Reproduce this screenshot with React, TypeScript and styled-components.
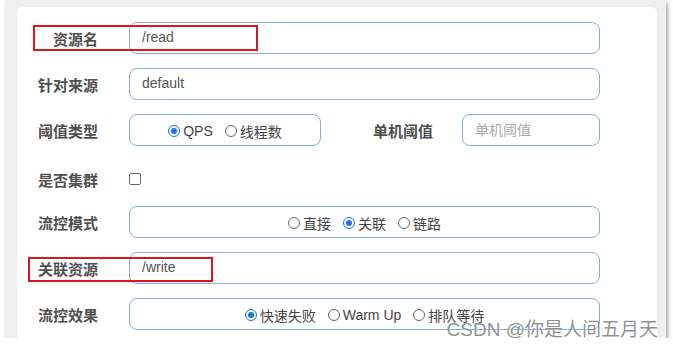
import styled, { createGlobalStyle } from "styled-components";

const GlobalStyle = createGlobalStyle`
  html, body {
    margin: 0;
    padding: 0;
    background: #ffffff;
  }
  body {
    font-family: "Liberation Sans", "Noto Sans CJK SC", sans-serif;
  }
`;

const Frame = styled.div`
  position: relative;
  box-sizing: border-box;
  width: 661px;
  height: 338px;
  margin-left: 5px;
  padding: 7px 9px 0 12px;
  background: #efefef;
  box-shadow: 2px 3px 4px rgba(0, 0, 0, 0.35);
`;

const Card = styled.div`
  box-sizing: border-box;
  height: 331px;
  background: #ffffff;
  border-radius: 6px 6px 0 0;
  padding: 15px 57px 0 0;
  display: grid;
  grid-template-columns: 81px 1fr;
  grid-auto-rows: 32px;
  column-gap: 31px;
  row-gap: 14px;
`;

const Label = styled.div<{ $shift?: number }>`
  position: relative;
  display: flex;
  align-items: center;
  justify-content: flex-end;
  padding-top: ${(p) => p.$shift ?? 0}px;
  font-family: "Noto Sans CJK SC", sans-serif;
  font-size: 15px;
  font-weight: 700;
  color: #4f4f4f;
`;

const Field = styled.div<{ $width?: number; $center?: boolean }>`
  box-sizing: border-box;
  width: ${(p) => (p.$width ? `${p.$width}px` : "100%")};
  height: 32px;
  border: 1px solid #88aed8;
  border-radius: 8px;
  padding: ${(p) => (p.$center ? "2px 12px 0" : "0 12px 2px")};
  display: flex;
  align-items: center;
  justify-content: ${(p) => (p.$center ? "center" : "flex-start")};
  gap: 12px;
  font-family: "Liberation Sans", "Noto Sans CJK SC", sans-serif;
  font-size: 14px;
  color: #555555;
`;

const Placeholder = styled.span`
  font-family: "Noto Sans CJK SC", sans-serif;
  color: #aaaaaa;
  font-size: 14px;
`;

const Split = styled.div`
  display: flex;
  align-items: center;
`;

const SideLabel = styled(Label)`
  width: 112px;
  margin-right: 29px;
`;

const Option = styled.span`
  display: inline-flex;
  align-items: center;
  gap: 3px;
  font-family: "Liberation Sans", "Noto Sans CJK SC", sans-serif;
  font-size: 14px;
  color: #444444;
`;

const Radio = styled.span<{ $on?: boolean }>`
  box-sizing: border-box;
  width: 12px;
  height: 12px;
  border-radius: 50%;
  border: ${(p) => (p.$on ? "1.5px solid #1a73e8" : "1px solid #666666")};
  display: inline-flex;
  align-items: center;
  justify-content: center;
  &::after {
    content: "";
    width: 6px;
    height: 6px;
    border-radius: 50%;
    background: ${(p) => (p.$on ? "#1a73e8" : "transparent")};
  }
`;

const CheckCell = styled.div`
  display: flex;
  align-items: center;
  padding-top: 6px;
`;

const Checkbox = styled.span`
  box-sizing: border-box;
  width: 12px;
  height: 12px;
  border: 1px solid #666666;
  border-radius: 2px;
`;

const Highlight = styled.div<{ $left: number; $top: number; $width: number; $height: number }>`
  position: absolute;
  left: ${(p) => p.$left}px;
  top: ${(p) => p.$top}px;
  width: ${(p) => p.$width}px;
  height: ${(p) => p.$height}px;
  box-sizing: border-box;
  border: 2px solid #e3131b;
  pointer-events: none;
`;

const Watermark = styled.div`
  position: absolute;
  right: 8px;
  bottom: -3px;
  font-family: "Liberation Sans", "Noto Sans CJK SC", sans-serif;
  font-size: 19px;
  color: rgba(125, 125, 125, 0.85);
  text-shadow: 0 0 1px rgba(255, 255, 255, 0.9);
  white-space: nowrap;
`;

const App = () => {
  return (
    <>
      <GlobalStyle />
      <Frame>
        <Card>
          <Label>
            资源名
            <Highlight $left={16} $top={3} $width={225} $height={26} />
          </Label>
          <Field>/read</Field>

          <Label>针对来源</Label>
          <Field>default</Field>

          <Label>阈值类型</Label>
          <Split>
            <Field $width={192} $center>
              <Option>
                <Radio $on />
                QPS
              </Option>
              <Option>
                <Radio />
                线程数
              </Option>
            </Field>
            <SideLabel>单机阈值</SideLabel>
            <Field $width={138}>
              <Placeholder>单机阈值</Placeholder>
            </Field>
          </Split>

          <Label $shift={6}>是否集群</Label>
          <CheckCell>
            <Checkbox />
          </CheckCell>

          <Label>流控模式</Label>
          <Field $center>
            <Option>
              <Radio />
              直接
            </Option>
            <Option>
              <Radio $on />
              关联
            </Option>
            <Option>
              <Radio />
              链路
            </Option>
          </Field>

          <Label>
            关联资源
            <Highlight $left={11} $top={5} $width={185} $height={25} />
          </Label>
          <Field>/write</Field>

          <Label>流控效果</Label>
          <Field $center>
            <Option>
              <Radio $on />
              快速失败
            </Option>
            <Option>
              <Radio />
              Warm Up
            </Option>
            <Option>
              <Radio />
              排队等待
            </Option>
          </Field>
        </Card>
        <Watermark>CSDN @你是人间五月天</Watermark>
      </Frame>
    </>
  );
};

export default App;
